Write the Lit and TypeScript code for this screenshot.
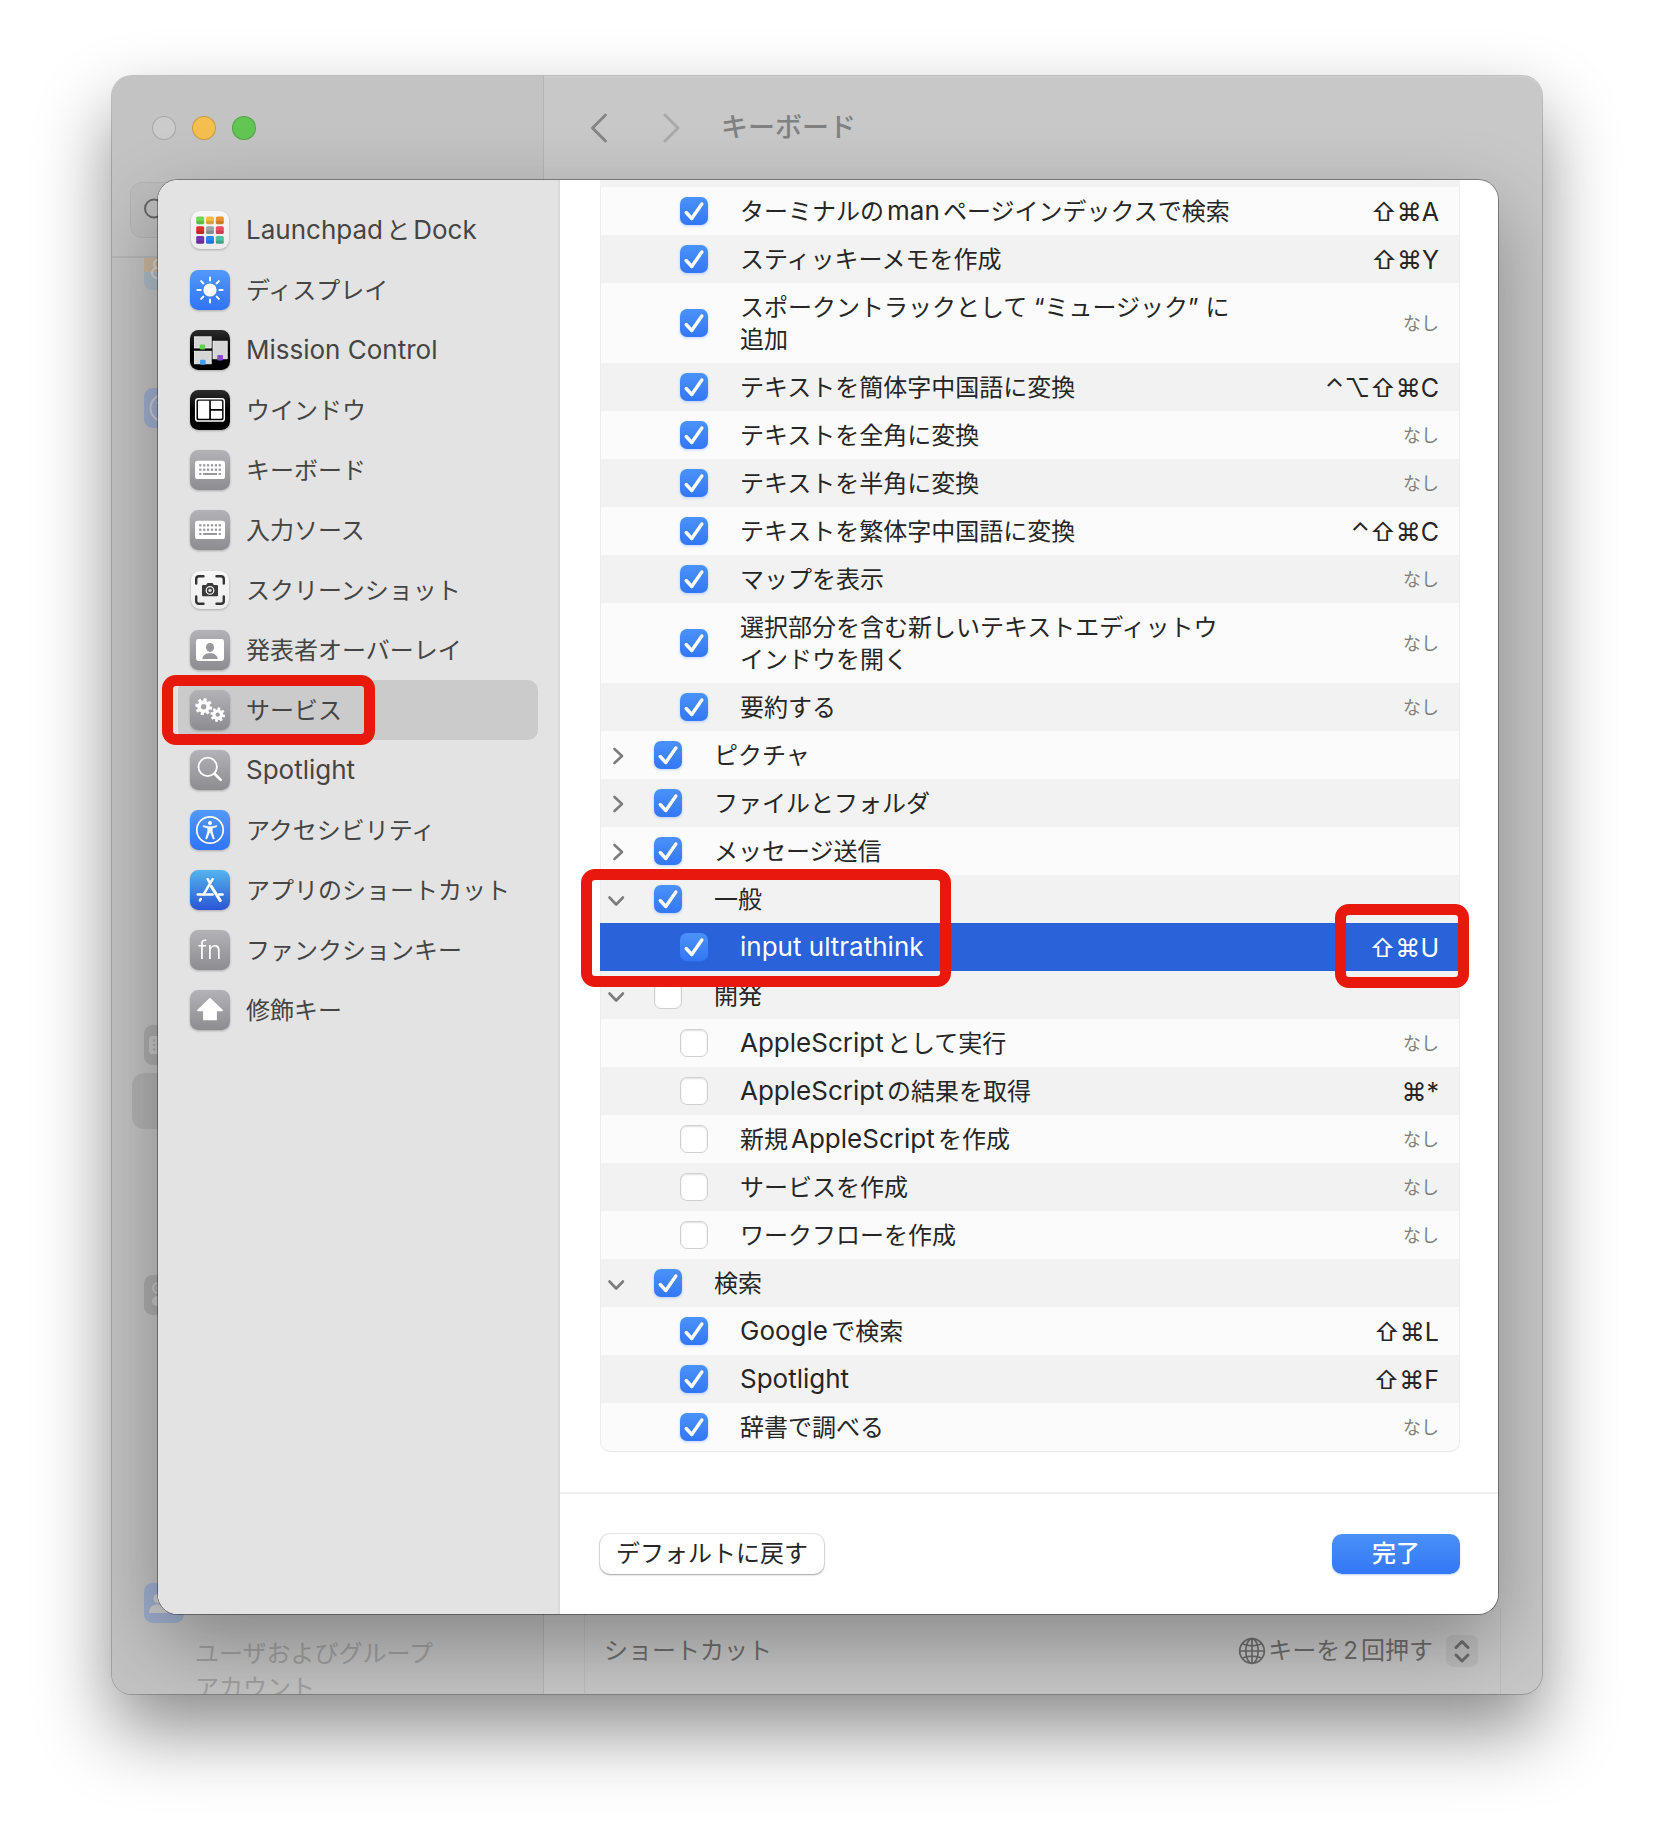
import { LitElement, html, svg, css, nothing } from "lit";
import { customElement, state } from "lit/decorators.js";
import { classMap } from "lit/directives/class-map.js";

type Kind = "grey" | "blue" | "black" | "white" | "store";

interface NavItem {
  label: string;
  kind: Kind;
  art: unknown;
}

interface Row {
  label: string;
  checked: boolean;
  level: 0 | 1;
  open?: boolean;
  keys?: string;
  selected?: boolean;
}

// Latin runs are set slightly larger than the Japanese text around them.
const mixed = (text: string) =>
  text
    .split(/([A-Za-z][A-Za-z ]*[A-Za-z])/)
    .map((part, i) => (i % 2 ? html`<span class="latin">${part}</span>` : part));

const gear = (cx: number, cy: number, outer: number, inner: number, hole: number) => {
  const points: string[] = [];
  const teeth = 8;
  for (let i = 0; i < teeth; i++) {
    const a = (i * 2 * Math.PI) / teeth + 0.2;
    for (const [r, d] of [
      [inner, -0.27],
      [outer, -0.17],
      [outer, 0.17],
      [inner, 0.27],
    ]) {
      points.push(`${(cx + r * Math.cos(a + d)).toFixed(2)} ${(cy + r * Math.sin(a + d)).toFixed(2)}`);
    }
  }
  return svg`<path fill="#fff" fill-rule="evenodd" d="M${points.join("L")}Z M${cx - hole} ${cy}a${hole} ${hole} 0 1 0 ${hole * 2} 0a${hole} ${hole} 0 1 0 ${-hole * 2} 0Z"/>`;
};

const keyboardArt = svg`
  <rect x="5" y="10.7" width="30" height="18.4" rx="2.6" fill="#fff"/>
  <g fill="#98979c">
    ${[14.2, 18.6].map((y) => [9.2, 13.1, 17, 20.9, 24.8, 28.7].map((x) => svg`<rect x=${x} y=${y} width="2.2" height="2.2"/>`))}
    <rect x="9.2" y="23" width="2.2" height="2"/><rect x="13.1" y="23" width="13.9" height="2"/><rect x="28.7" y="23" width="2.2" height="2"/>
  </g>`;

const pads: [number, number, string][] = [
  [6.2, 6.4, "#6fdc4c"], [16, 6.4, "#f5c142"], [25.8, 6.4, "#ec9230"],
  [6.2, 16.2, "#dc3327"], [16, 16.2, "#9da3a6"], [25.8, 16.2, "#ee4a62"],
  [6.2, 26, "#7a32b8"], [16, 26, "#2b86e8"], [25.8, 26, "#4fbfa0"],
];

const NAV: NavItem[] = [
  {
    label: "LaunchpadとDock",
    kind: "white",
    art: pads.map(([x, y, c]) => svg`<rect x=${x} y=${y} width="8" height="7.8" rx="1.6" fill=${c}/><rect x=${x} y=${y + 4.4} width="8" height="3.4" rx="1.6" fill="#000" opacity=".14"/>`),
  },
  {
    label: "ディスプレイ",
    kind: "blue",
    art: svg`<circle cx="20" cy="20" r="6.6" fill="#fff"/>
      <g stroke="#fff" stroke-width="2" stroke-linecap="round">
        ${[0, 45, 90, 135, 180, 225, 270, 315].map((a) => svg`<path d="M20 10.6V7.4" transform="rotate(${a} 20 20)"/>`)}
      </g>`,
  },
  {
    label: "Mission Control",
    kind: "black",
    art: svg`<g fill="#d6d6d6" stroke="#f6f6f6" stroke-width=".8">
        <rect x="4.4" y="6.8" width="16.8" height="11.2"/><rect x="4.4" y="21.2" width="16.8" height="12.6"/><rect x="23" y="11.2" width="14.2" height="17.6"/></g>
      <rect x="9.8" y="14.6" width="5.4" height="5" rx="1" fill="#5fd04a"/>
      <rect x="10" y="29.8" width="5.6" height="5" rx="1" fill="#3d9cf0"/>
      <rect x="27.2" y="25" width="5.8" height="5.6" rx="1" fill="#8d4bd0"/>`,
  },
  {
    label: "ウインドウ",
    kind: "black",
    art: svg`<rect x="5.7" y="8.7" width="28.6" height="22.4" rx="2.6" fill="none" stroke="#fff" stroke-width="1.5"/>
      <g fill="#fff"><path d="M9.2 10.7h10v18h-10a1.2 1.2 0 0 1-1.2-1.2v-15.600a1.200 1.200 0 0 1 1.200-1.200Z"/>
      <path d="M20.900 10.700h10a1.200 1.200 0 0 1 1.200 1.200v7h-11.200Z"/><path d="M20.900 20.700h11.200v6.800a1.200 1.200 0 0 1-1.200 1.200h-10Z"/></g>`,
  },
  { label: "キーボード", kind: "grey", art: keyboardArt },
  { label: "入力ソース", kind: "grey", art: keyboardArt },
  {
    label: "スクリーンショット",
    kind: "white",
    art: svg`<g fill="none" stroke="#333" stroke-width="2.4" stroke-linecap="round">
        <path d="M6.200 13.500V9a2.800 2.800 0 0 1 2.800-2.800h4.500"/><path d="M26.500 6.200H31A2.800 2.800 0 0 1 33.800 9v4.500"/>
        <path d="M33.800 26.500V31a2.800 2.800 0 0 1-2.800 2.800h-4.500"/><path d="M13.500 33.800H9A2.800 2.800 0 0 1 6.200 31v-4.500"/></g>
      <path fill="#3a3a3a" d="M13 15h3.200l1.300-1.900h5l1.300 1.900H27a1 1 0 0 1 1 1v9.200a1 1 0 0 1-1 1H13a1 1 0 0 1-1-1V16a1 1 0 0 1 1-1Z"/>
      <circle cx="20" cy="20.400" r="3.800" fill="none" stroke="#eee" stroke-width="1.300"/><circle cx="20" cy="20.400" r="1.700" fill="#ddd"/>`,
  },
  {
    label: "発表者オーバーレイ",
    kind: "grey",
    art: svg`<rect x="6" y="9" width="28" height="22" rx="2.400" fill="#fff"/>
      <ellipse cx="20" cy="17.400" rx="4" ry="4.500" fill="#98979c"/><path d="M12.200 29c.6-4 3.600-5.800 7.800-5.800s7.200 1.800 7.800 5.800Z" fill="#98979c"/>`,
  },
  {
    label: "サービス",
    kind: "grey",
    art: svg`${gear(13.7, 16.7, 8.6, 6.2, 2.7)}${gear(27.7, 24.7, 7.4, 5.3, 2.1)}`,
  },
  {
    label: "Spotlight",
    kind: "grey",
    art: svg`<circle cx="17.700" cy="16.900" r="9.200" fill="none" stroke="#fff" stroke-width="1.800"/>
      <path d="M24.700 23.900l6 6" stroke="#fff" stroke-width="2.600" stroke-linecap="round"/>`,
  },
  {
    label: "アクセシビリティ",
    kind: "blue",
    art: svg`<circle cx="20" cy="20" r="13.200" fill="none" stroke="#fff" stroke-width="1.700"/>
      <circle cx="20" cy="12.900" r="2" fill="#fff"/>
      <path fill="#fff" stroke="#fff" stroke-width=".8" stroke-linejoin="round" d="M13.400 15.700l4.600 1.100h4l4.600-1.100.2.900-4.600 1.500v3.400l2.100 7.200-1 .4-3-7.300h-.6l-3 7.300-1-.4 2.100-7.200v-3.400l-4.600-1.500Z"/>`,
  },
  {
    label: "アプリのショートカット",
    kind: "store",
    art: svg`<g stroke="#fff" stroke-width="2.500" stroke-linecap="round" fill="none">
      <path d="M22.600 9.200L13.800 24.200"/><path d="M17.700 9.200l1.600 2.800"/><path d="M21.300 16.400L30.300 30.600" stroke-width="3"/>
      <path d="M7.800 24.500h14.800"/><path d="M29 24.500h3.600"/><path d="M10.800 29l-.9 1.500"/></g>`,
  },
  {
    label: "ファンクションキー",
    kind: "grey",
    art: svg`<text x="20" y="28.500" text-anchor="middle" font-size="25" font-weight="300" font-family="Inter, 'Liberation Sans', sans-serif" fill="#fff">fn</text>`,
  },
  {
    label: "修飾キー",
    kind: "grey",
    art: svg`<path d="M20 8.800L32 20.400h-6v9H14v-9H8Z" fill="#fff" stroke="#fff" stroke-width="1.800" stroke-linejoin="round"/>`,
  },
];

const ROWS: Row[] = [
  { label: "ターミナルのmanページインデックスで検索", checked: true, level: 1, keys: "⇧⌘A" },
  { label: "スティッキーメモを作成", checked: true, level: 1, keys: "⇧⌘Y" },
  { label: "スポークントラックとして “ミュージック” に追加", checked: true, level: 1 },
  { label: "テキストを簡体字中国語に変換", checked: true, level: 1, keys: "⌃⌥⇧⌘C" },
  { label: "テキストを全角に変換", checked: true, level: 1 },
  { label: "テキストを半角に変換", checked: true, level: 1 },
  { label: "テキストを繁体字中国語に変換", checked: true, level: 1, keys: "⌃⇧⌘C" },
  { label: "マップを表示", checked: true, level: 1 },
  { label: "選択部分を含む新しいテキストエディットウインドウを開く", checked: true, level: 1 },
  { label: "要約する", checked: true, level: 1 },
  { label: "ピクチャ", checked: true, level: 0, open: false },
  { label: "ファイルとフォルダ", checked: true, level: 0, open: false },
  { label: "メッセージ送信", checked: true, level: 0, open: false },
  { label: "一般", checked: true, level: 0, open: true },
  { label: "input ultrathink", checked: true, level: 1, keys: "⇧⌘U", selected: true },
  { label: "開発", checked: false, level: 0, open: true },
  { label: "AppleScriptとして実行", checked: false, level: 1 },
  { label: "AppleScriptの結果を取得", checked: false, level: 1, keys: "⌘*" },
  { label: "新規AppleScriptを作成", checked: false, level: 1 },
  { label: "サービスを作成", checked: false, level: 1 },
  { label: "ワークフローを作成", checked: false, level: 1 },
  { label: "検索", checked: true, level: 0, open: true },
  { label: "Googleで検索", checked: true, level: 1, keys: "⇧⌘L" },
  { label: "Spotlight", checked: true, level: 1, keys: "⇧⌘F" },
  { label: "辞書で調べる", checked: true, level: 1 },
];

@customElement("app-root")
export class AppRoot extends LitElement {
  @state() private current = "サービス";

  static styles = css`
    :host {
      display: block;
      font-family: Inter, "Noto Sans CJK JP", "Liberation Sans", sans-serif;
      font-size: 24px;
      line-height: 32px;
      color: #262626;
      background: #fff;
      text-autospace: normal;
    }
    * { box-sizing: border-box; }
    button, input { font: inherit; color: inherit; margin: 0; }
    button { border: 0; padding: 0; background: none; text-align: left; }
    svg { display: block; }
    .latin { font-size: 26px; line-height: 26px; }

    .stage { padding: 76px 112px 148px; overflow: hidden; }
    .window {
      display: grid;
      border-radius: 20px;
      box-shadow: 0 0 0 1px rgba(0, 0, 0, 0.2), 0 36px 76px rgba(0, 0, 0, 0.46);
      background: #c8c8c8;
    }
    .backdrop, .sheet, .shade { grid-area: 1 / 1; }

    .backdrop {
      contain: size;
      display: grid;
      grid-template-columns: 432px minmax(0, 1fr);
      border-radius: 20px;
      overflow: hidden;
      box-shadow: inset 0 1px #d0d0d0;
    }
    .side { display: flex; flex-direction: column; min-height: 0; background: #c3c3c3; border-right: 1px solid #b4b4b4; }
    .lights { display: flex; gap: 16px; padding: 40px; }
    .light { width: 24px; height: 24px; border-radius: 50%; border: 1px solid rgba(0, 0, 0, 0.18); background: #cbcbcb; }
    .light.min { background: #f5bf4f; }
    .light.max { background: #62c554; }
    .search {
      display: flex; align-items: center; gap: 8px; margin: 2px 18px 18px; padding: 0 13px; height: 56px;
      border: 1px solid #b4b4b4; border-radius: 12px; background: #bebebe; color: #666;
    }
    .search input { flex: 1; min-width: 0; border: 0; background: none; outline: 0; }
    .places {
      flex: 1; min-height: 0; overflow: hidden; border-top: 2px solid #b6b6b6; padding: 0 20px;
      display: grid; align-content: start; justify-items: stretch;
      grid-template-rows: 32px 98px 40px 597px 40px 8px 56px 146px 40px 268px 40px 14px 68px;
    }
    .place { width: 40px; height: 40px; margin-left: 12px; opacity: 0.4; align-self: end; }
    .r1 { grid-row: 1; } .r3 { grid-row: 3; } .r5 { grid-row: 5; } .r7 { grid-row: 7; }
    .r9 { grid-row: 9; } .r11 { grid-row: 11; } .r13 { grid-row: 13; }
    .spot { border-radius: 12px; background: rgba(0, 0, 0, 0.08); }
    .account { padding-left: 63px; padding-right: 60px; color: #a0a0a0; line-height: 34px; }

    .body { display: flex; flex-direction: column; justify-content: space-between; min-width: 0; }
    .toolbar { display: flex; align-items: center; height: 104px; padding-left: 43px; gap: 40px; color: #868686; }
    .toolbar .fwd { color: #aaa; }
    .toolbar h1 { margin: 0; font-size: 27px; line-height: 32px; font-weight: 500; color: #818181; }
    .option {
      display: flex; align-items: center; justify-content: space-between; margin: 0 41px 0 40px;
      height: 86px; padding: 0 22px 0 19px; border: solid rgba(0, 0, 0, 0.05); border-width: 0 1px; color: #6e6e6e;
    }
    .popup { display: flex; align-items: center; gap: 13px; }
    .value { display: flex; align-items: center; gap: 2px; }
    .stepper { width: 32px; height: 32px; border-radius: 7px; background: rgba(0, 0, 0, 0.05); }

    .sheet {
      display: grid; grid-template-columns: 402px minmax(0, 1fr);
      margin: 104px 44px 80px 46px; border-radius: 20px; overflow: clip; background: #fff;
      z-index: 1;
    }
    .shade {
      margin: 104px 44px 80px 46px; border-radius: 20px;
      box-shadow: 0 0 0 1px rgba(0, 0, 0, 0.35), 0 30px 80px rgba(0, 0, 0, 0.32);
      clip-path: inset(-104px -44px -80px -46px round 20px);
    }
    .nav { background: #e3e3e3; border-right: 2px solid #dadada; padding: 20px 20px 20px; }
    .item {
      position: relative; display: flex; align-items: center; gap: 16px; width: 100%; height: 60px;
      padding-left: 12px; border-radius: 10px; color: #454545;
    }
    .item.on { background: #cbcbcb; }
    .item .text { padding-top: 2px; }
    .icon { width: 40px; height: 40px; flex: none; filter: drop-shadow(0 1px 1px rgba(0, 0, 0, 0.25)); }

    .main { display: flex; flex-direction: column; min-width: 0; }
    .list { padding: 0 38px 40px 40px; }
    .peek { height: 7px; background: #f2f2f2; }
    table { width: 100%; border-collapse: separate; border-spacing: 0; table-layout: fixed; }
    .c-keys { width: 200px; }
    tr { background: #fbfbfb; }
    tr:nth-child(even) { background: #f2f2f2; }
    td { padding: 7px 0; vertical-align: middle; }
    td:first-child { border-left: 1px solid #ececec; }
    td:last-child { border-right: 1px solid #ececec; }
    tr.picked { background: #2962d9; color: #fff; }
    tr.picked td { border-color: #2962d9; }
    tr:last-child { background: none; }
    tr:last-child td { background: #fbfbfb; border-bottom: 1px solid #e6e6e6; }
    tr:last-child td:first-child { border-bottom-left-radius: 10px; }
    tr:last-child td:last-child { border-bottom-right-radius: 10px; }
    .line { position: relative; display: flex; align-items: center; padding-left: 79px; gap: 32px; }
    .line.top { padding-left: 4px; }
    .line.top .twist { margin-right: -11px; }
    .twist { width: 28px; height: 28px; color: #7c7c7c; }
    .name { max-width: 496px; padding-top: 2px; word-break: break-all; }
    .box { display: grid; width: 28px; height: 28px; flex: none; }
    .box > * { grid-area: 1 / 1; }
    .box svg { pointer-events: none; }
    .box input {
      appearance: none; width: 28px; height: 28px; border-radius: 7px; background: #fff;
      border: 1px solid #cfcfcf; box-shadow: inset 0 1px 2px rgba(0, 0, 0, 0.12);
    }
    .box input:checked {
      border: 0; background: linear-gradient(#4a92f8, #3377f6); box-shadow: 0 1px 3px rgba(51, 119, 246, 0.3);
    }
    .keys { position: relative; height: 34px; padding: 2px 20px 0 0; text-align: right; font-size: 25px; white-space: nowrap; }
    .none { display: block; font-size: 18px; color: #808080; }

    .mark { position: absolute; z-index: 3; border: 11px solid #e8180c; border-radius: 14px; pointer-events: none; }
    .mark.nav-mark { left: -16px; top: -5px; width: 213px; height: 70px; }
    .mark.group-mark { left: -20px; top: -13px; width: 370px; height: 118px; }
    .mark.key-mark { right: -10px; top: -26px; width: 134px; height: 84px; }

    .foot { display: flex; justify-content: space-between; border-top: 2px solid #f0f0f0; padding: 40px 38px 40px 40px; }
    .btn { height: 40px; border-radius: 10px; padding: 0 16px; text-align: center; background: #fff;
      box-shadow: 0 0 0 1px rgba(0, 0, 0, 0.09), 0 1px 2px rgba(0, 0, 0, 0.3); }
    .btn.go { min-width: 128px; color: #fff; background: linear-gradient(#4b91f8, #3377f6); box-shadow: 0 1px 2px rgba(51, 119, 246, 0.35); font-weight: 500; }
  `;

  private tile(kind: Kind, art: unknown) {
    const r = kind === "white" ? 9 : 8.5;
    const inset = kind === "white" ? 1 : 0;
    return html`<svg class="icon" viewBox="0 0 40 40" aria-hidden="true">
      <defs>
        <linearGradient id="grey" x2="0" y2="1"><stop stop-color="#b3b2b7" /><stop offset="1" stop-color="#8d8c91" /></linearGradient>
        <linearGradient id="blue" x2="0" y2="1"><stop stop-color="#5298f9" /><stop offset="1" stop-color="#3074f6" /></linearGradient>
        <linearGradient id="black" x2="0" y2="1"><stop stop-color="#2c2c2c" /><stop offset=".5" stop-color="#000" /></linearGradient>
        <linearGradient id="white" x2="0" y2="1"><stop stop-color="#f8f8f8" /><stop offset="1" stop-color="#ececec" /></linearGradient>
        <linearGradient id="store" x2="0" y2="1"><stop stop-color="#54b4ee" /><stop offset="1" stop-color="#2a55d6" /></linearGradient>
      </defs>
      <rect x=${inset} y=${inset} width=${40 - inset * 2} height=${40 - inset * 2} rx=${r} fill="url(#${kind})" />
      ${art}
    </svg>`;
  }

  private place(row: string, color: string, art: unknown) {
    return html`<svg class="place ${row}" viewBox="0 0 40 40" aria-hidden="true">
      <rect width="40" height="40" rx="8.5" fill=${color} />${art}
    </svg>`;
  }

  private renderBackdrop() {
    return html`<div class="backdrop">
      <div class="side">
        <div class="lights">
          <button class="light" aria-label="閉じる"></button>
          <button class="light min" aria-label="しまう"></button>
          <button class="light max" aria-label="拡大"></button>
        </div>
        <div class="search">
          <svg width="24" height="24" viewBox="0 0 24 24" fill="none" stroke="currentColor" stroke-width="2"><circle cx="10" cy="10.500" r="9" /><path d="M17 17l6 6" /></svg>
          <input type="search" aria-label="検索" />
        </div>
        <div class="places">
          ${this.place("r1", "#d9a566", svg`<path d="M0 22h40v10q0 8-8 8H8q-8 0-8-8Z" fill="#8fb4cc"/><circle cx="14" cy="14" r="4" fill="none" stroke="#eee" stroke-width="2"/><circle cx="13" cy="23" r="5" fill="none" stroke="#eee" stroke-width="2"/>`)}
          ${this.place("r3", "#6c93e0", svg`<circle cx="20" cy="20" r="13.500" fill="none" stroke="#ddd" stroke-width="2"/><path d="M13 15h14" stroke="#ddd" stroke-width="2"/>`)}
          ${this.place("r5", "#8d8d8d", svg`<rect x="5" y="11" width="30" height="18" rx="3" fill="#ccc"/><path d="M9 15.500h20M9 20h20M9 24.500h20" stroke="#888" stroke-width="2" stroke-dasharray="2 2"/>`)}
          <div class="spot r7"></div>
          ${this.place("r9", "#8d8d8d", svg`<circle cx="14" cy="13" r="5" fill="none" stroke="#ccc" stroke-width="2"/><circle cx="14" cy="13" r="2" fill="#ccc"/><rect x="8" y="21" width="24" height="10" rx="5" fill="#ccc"/>`)}
          ${this.place("r11", "#6c93e0", svg`<g fill="#ddd"><circle cx="14" cy="15.500" r="4.500"/><path d="M5 30c0-6 3.500-8.500 9-8.500s9 2.500 9 8.500Z"/><circle cx="27" cy="16.500" r="4"/><path d="M24.500 30c0-3-.8-5.500-2-7 5-3 12 0 12 7Z"/></g>`)}
          <div class="account r13">ユーザおよびグループ<br />アカウント</div>
        </div>
      </div>
      <div class="body">
        <div class="toolbar">
          <button aria-label="戻る"><svg width="32" height="32" viewBox="0 0 32 32" fill="none" stroke="currentColor" stroke-width="3" stroke-linecap="round" stroke-linejoin="round"><path d="M18.500 3L5.500 16l13 13" /></svg></button>
          <button class="fwd" aria-label="進む"><svg width="22" height="32" viewBox="0 0 22 32" fill="none" stroke="currentColor" stroke-width="3" stroke-linecap="round" stroke-linejoin="round"><path d="M6 3l13 13L6 29" /></svg></button>
          <h1>キーボード</h1>
        </div>
        <div class="option">
          <span>ショートカット</span>
          <button class="popup">
            <span class="value">
              <svg width="28" height="28" viewBox="0 0 28 28" fill="none" stroke="currentColor" stroke-width="1.700"><circle cx="14" cy="14" r="12.300" /><ellipse cx="14" cy="14" rx="6.200" ry="12.300" /><path d="M14 1.700v24.600M1.700 14h24.600M4 6.800q10 4 20 0M4 21.200q10-4 20 0" /></svg>
              キーを2回押す
            </span>
            <svg class="stepper" viewBox="0 0 32 32" fill="none" stroke="currentColor" stroke-width="3" stroke-linecap="round" stroke-linejoin="round"><path d="M10 12.500l6-6 6 6M10 20l6 6 6-6" /></svg>
          </button>
        </div>
      </div>
    </div>`;
  }

  private renderRow(row: Row, i: number) {
    const id = `service-${i}`;
    return html`<tr class=${classMap({ picked: !!row.selected })}>
      <td>
        <div class=${classMap({ line: true, top: row.level === 0 })}>
          ${row.level === 0
            ? html`<button class="twist" aria-expanded=${row.open ? "true" : "false"} aria-label=${row.label}>
                <svg width="28" height="28" viewBox="0 0 28 28" fill="none" stroke="currentColor" stroke-width="2.600" stroke-linecap="round" stroke-linejoin="round">
                  <path d=${row.open ? "M4.500 12.500l6.700 7 6.700-7" : "M9.500 8l7.500 7-7.500 7"} />
                </svg>
              </button>`
            : nothing}
          <span class="box">
            <input type="checkbox" id=${id} .checked=${row.checked} />
            ${row.checked
              ? html`<svg width="28" height="28" viewBox="0 0 28 28" fill="none" stroke="#fff" stroke-width="3.400" stroke-linecap="round" stroke-linejoin="round"><path d="M6.200 15.500l5.600 6L21.800 7" /></svg>`
              : nothing}
          </span>
          <label class="name" for=${id}>${mixed(row.label)}</label>
          ${row.label === "一般" ? html`<span class="mark group-mark"></span>` : nothing}
        </div>
      </td>
      <td>
        <div class="keys">
          ${row.keys ? row.keys : row.level === 1 ? html`<span class="none">なし</span>` : nothing}
          ${row.selected ? html`<span class="mark key-mark"></span>` : nothing}
        </div>
      </td>
    </tr>`;
  }

  render() {
    return html`<div class="stage">
      <div class="window">
        ${this.renderBackdrop()}
        <div class="shade"></div>
        <div class="sheet" role="dialog" aria-label="キーボードショートカット">
          <nav class="nav">
            ${NAV.map(
              (n) => html`<button class=${classMap({ item: true, on: n.label === this.current })} @click=${() => (this.current = n.label)}>
                ${this.tile(n.kind, n.art)}<span class="text">${mixed(n.label)}</span>
                ${n.label === "サービス" ? html`<span class="mark nav-mark"></span>` : nothing}
              </button>`
            )}
          </nav>
          <div class="main">
            <div class="list">
              <div class="peek"></div>
              <table>
                <colgroup><col /><col class="c-keys" /></colgroup>
                <tbody>${ROWS.map((r, i) => this.renderRow(r, i))}</tbody>
              </table>
            </div>
            <div class="foot">
              <button class="btn">デフォルトに戻す</button>
              <button class="btn go">完了</button>
            </div>
          </div>
        </div>
      </div>
    </div>`;
  }
}
